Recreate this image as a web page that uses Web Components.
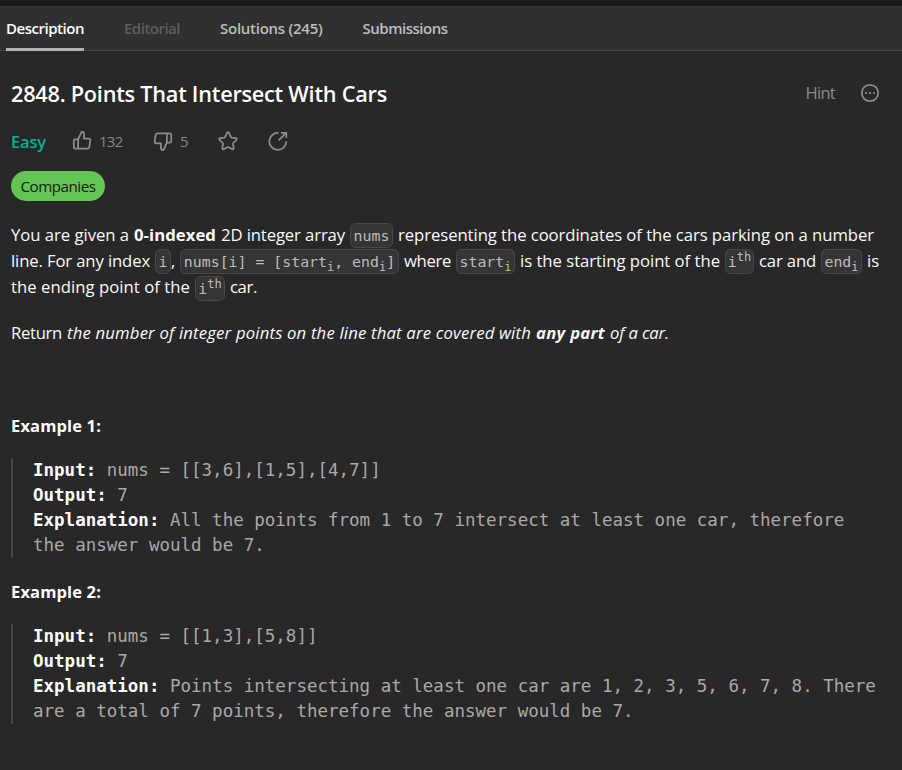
<!DOCTYPE html>
<html lang="en">
<head>
<meta charset="utf-8">
<title>Points That Intersect With Cars</title>
<style>
body { margin: 0; background: #282828; }
</style>
</head>
<body>
<problem-page></problem-page>
<script>
const define = (name, html, setup) => {
  const template = document.createElement('template');
  template.innerHTML = html;
  customElements.define(name, class extends HTMLElement {
    connectedCallback() {
      if (this.shadowRoot) return;
      this.attachShadow({ mode: 'open' }).append(template.content.cloneNode(true));
      if (setup) setup(this);
    }
  });
};

/* A single-line run of text whose tracking is adjusted to the width in "w". */
define('fit-text', `<style>
  :host { display: inline-block; white-space: pre; flex: none; }
</style><slot></slot>`, el => {
  const w = +el.getAttribute('w');
  const n = el.textContent.length;
  el.style.letterSpacing = ((w - el.getBoundingClientRect().width) / n).toFixed(4) + 'px';
  el.style.width = w + 'px';
});

define('tab-item', `<style>
  :host { display: flex; align-items: center; height: 45px; box-sizing: border-box; font: 600 15px "Open Sans", sans-serif; color: #bdbdbd; border-bottom: 3px solid transparent; padding-top: 2px; }
  :host([active]) { color: #fff; border-bottom-color: #b3b3b3; }
  :host([disabled]) { color: #5e5e5e; }
</style><slot></slot>`);

define('tab-bar', `<style>
  :host { display: flex; gap: 40px; height: 45px; padding-left: 6px; border-top: 6px solid #1a1a1a; background: linear-gradient(#303030 44px, #454545 44px); }
</style><slot></slot>`);

const icons = {
  up: '<path d="M5.2 8.3 H3.2 Q1.8 8.3 1.8 9.7 V16.3 Q1.8 17.7 3.2 17.7 H15.4 Q17 17.7 17.3 16.2 L18.3 9.4 Q18.4 7.6 16.7 7.6 H12 V2.9 Q12 0.9 10.2 0.9 Q9.5 0.9 9.2 1.6 L6.6 7.4 Q6.2 8.3 5.2 8.3 Z M6.1 8.3 V17.5"/>',
  down: '<path d="M14.8 11.7 H16.8 Q18.2 11.7 18.2 10.3 V3.7 Q18.2 2.3 16.8 2.3 H4.6 Q3 2.3 2.7 3.8 L1.7 10.6 Q1.6 12.4 3.3 12.4 H8 V17.1 Q8 19.1 9.8 19.1 Q10.5 19.1 10.8 18.4 L13.4 12.6 Q13.8 11.7 14.8 11.7 Z M13.9 11.7 V2.5"/>',
  star: '<path d="M9.1 1.8 Q10 .5 10.9 1.8 L12.9 6 Q13.1 6.5 13.7 6.6 L17.9 7.2 Q19.4 7.6 18.4 8.8 L15.3 12 Q14.9 12.4 15 13 L15.7 17.3 Q15.8 18.9 14.3 18.2 L10.7 16.2 Q10 15.9 9.3 16.2 L5.7 18.2 Q4.2 18.9 4.3 17.3 L5 13 Q5.1 12.4 4.7 12 L1.6 8.8 Q.6 7.6 2.1 7.2 L6.3 6.6 Q6.9 6.5 7.1 6 Z"/>',
  share: '<path d="M10.5 1.9 A8.5 8.5 0 1 0 18.3 10.3 M13 1.8 H18.3 V7.1 M18 2.1 L10.7 9.4"/>',
  more: '<circle cx="10" cy="10" r="8.2"/><g fill="currentColor" stroke="none"><circle cx="6" cy="10" r="1.1"/><circle cx="10" cy="10" r="1.1"/><circle cx="14" cy="10" r="1.1"/></g>'
};
define('line-icon', `<style>
  :host { display: block; width: 20px; height: 20px; color: #8c8c8c; flex: none; }
  svg { display: block; fill: none; stroke: currentColor; stroke-width: 1.75; stroke-linejoin: round; }
</style><svg width="20" height="20" viewBox="0 0 20 20"></svg>`, el => {
  el.shadowRoot.querySelector('svg').innerHTML = icons[el.getAttribute('name')];
});

define('code-chip', `<style>
  :host { display: inline-flex; flex: none; align-items: baseline; box-sizing: border-box; height: 25px; border: 1px solid #484848; border-radius: 5.5px; background: #353535; color: #bcbcbc; font: 14.875px/24px "DejaVu Sans Mono", monospace; white-space: pre; justify-content: center; }
  ::slotted(sub), ::slotted(sup) { font-size: 12px; line-height: 0; position: relative; vertical-align: baseline; }
  ::slotted(sub) { top: 4px; }
  ::slotted(sup) { top: -6px; }
</style><slot></slot>`, el => { el.style.width = el.getAttribute('w') + 'px'; });

define('text-line', `<style>
  :host { display: flex; align-items: baseline; gap: 5px; height: 26px; font: 16.7px/26px "Open Sans", sans-serif; color: #fafafa; }
</style><slot></slot>`);

define('example-block', `<style>
  :host { display: block; }
  h2 { margin: 0; font: 700 16.5px/26px "Open Sans", sans-serif; color: #fff; }
  pre { margin: 19px 0 0; padding-left: 20px; border-left: 2px solid #484848; font: 17.5px/25px "DejaVu Sans Mono", monospace; color: #a8a8a8; height: 100px; }
  ::slotted(b) { color: #fff; }
</style><h2><slot name="title"></slot></h2><pre><slot></slot></pre>`);

define('problem-page', `<style>
  :host { display: block; width: 902px; height: 770px; overflow: hidden; background: #282828; font-family: "Open Sans", sans-serif; }
  main { padding: 26px 0 0 11px; }
  .head { display: flex; align-items: center; height: 32px; padding-right: 22px; }
  h1 { margin: 0; padding-top: 2px; font: 600 21.7px/32px "Open Sans", sans-serif; color: #fff; flex: 1; }
  .hint { font: 500 16.5px/24px "Open Sans", sans-serif; color: #8c8c8c; margin-right: 25px; }
  .stats { display: flex; align-items: center; height: 24px; margin-top: 20px; font-size: 15px; color: #858585; }
  .easy { color: #00af9b; font-weight: 600; font-size: 16.5px; margin-right: 26px; }
  .up { margin: 0 30.5px 0 7px; } .down { margin: 0 29.5px 0 7px; }
  .star { margin-right: 30px; }
  .tag { display: flex; align-items: center; justify-content: center; width: 94px; height: 30px; margin-top: 18px; border-radius: 15px; background: #62c554; color: #181818; font-size: 15.2px; }
  .body { margin-top: 21px; }
  .return { margin-top: 20px; }
  .low { position: relative; top: 1px; }
  .ex1 { margin-top: 67px; }
  .ex2 { margin-top: 21px; }
</style>
<tab-bar>
  <tab-item active><fit-text w="78">Description</fit-text></tab-item>
  <tab-item disabled><fit-text w="56">Editorial</fit-text></tab-item>
  <tab-item><fit-text w="102.5">Solutions (245)</fit-text></tab-item>
  <tab-item><fit-text w="85">Submissions</fit-text></tab-item>
</tab-bar>
<main>
  <div class="head"><h1><fit-text w="376">2848. Points That Intersect With Cars</fit-text></h1><fit-text class="hint" w="29.5">Hint</fit-text><line-icon name="more"></line-icon></div>
  <div class="stats">
    <fit-text class="easy" w="35">Easy</fit-text>
    <line-icon name="up"></line-icon><fit-text class="up" w="23.5">132</fit-text>
    <line-icon name="down"></line-icon><fit-text class="down" w="8">5</fit-text>
    <line-icon class="star" name="star"></line-icon><line-icon name="share"></line-icon>
  </div>
  <div class="tag"><fit-text w="75">Companies</fit-text></div>
  <div class="body">
    <text-line><fit-text w="118">You are given a</fit-text><fit-text w="82" style="font-weight:700">0-indexed</fit-text><fit-text w="124">2D integer array</fit-text><code-chip w="43">nums</code-chip><fit-text w="476">representing the coordinates of the cars parking on a number</fit-text></text-line>
    <text-line><fit-text w="139">line. For any index</fit-text><code-chip w="16">i</code-chip><fit-text w="4" style="margin-left:-5px">,</fit-text><code-chip w="219">nums[i] = [start<sub>i</sub>, end<sub>i</sub>]</code-chip><fit-text w="47">where</fit-text><code-chip w="59">start<sub>i</sub></code-chip><fit-text w="200">is the starting point of the</fit-text><code-chip w="29">i<sup>th</sup></code-chip><fit-text w="57">car and</fit-text><code-chip w="41">end<sub>i</sub></code-chip><fit-text w="12">is</fit-text></text-line>
    <text-line><fit-text w="179">the ending point of the</fit-text><code-chip class="low" w="30">i<sup>th</sup></code-chip><fit-text w="27">car.</fit-text></text-line>
    <text-line class="return"><fit-text w="51">Return</fit-text><fit-text w="464" style="font-style:italic">the number of integer points on the line that are covered with</fit-text><fit-text w="69" style="font-style:italic;font-weight:700">any part</fit-text><fit-text w="59" style="font-style:italic">of a car.</fit-text></text-line>
  </div>
  <example-block class="ex1"><fit-text slot="title" w="90">Example 1:</fit-text><b>Input:</b> nums = [[3,6],[1,5],[4,7]]
<b>Output:</b> 7
<b>Explanation:</b><span> All the points from 1 to 7 intersect at least one car, therefore</span>
<span>the answer would be 7.</span></example-block>
  <example-block class="ex2"><fit-text slot="title" w="90">Example 2:</fit-text><b>Input:</b> nums = [[1,3],[5,8]]
<b>Output:</b> 7
<b>Explanation:</b><span> Points intersecting at least one car are 1, 2, 3, 5, 6, 7, 8. There</span>
<span>are a total of 7 points, therefore the answer would be 7.</span></example-block>
</main>`);
</script>
</body>
</html>
